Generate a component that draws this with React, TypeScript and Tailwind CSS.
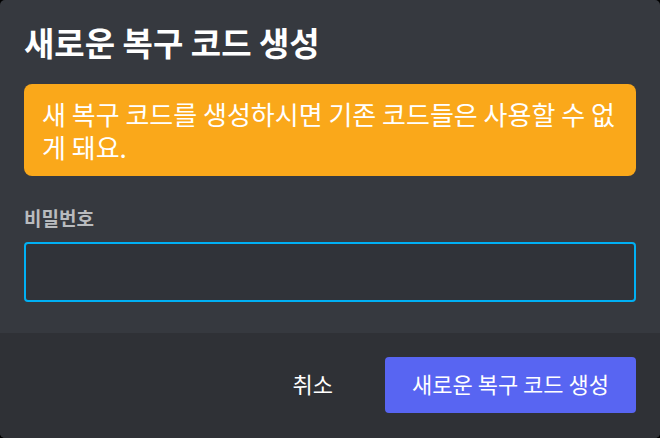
import React from "react";

export default function App() {
  const font = { fontFamily: '"Noto Sans CJK KR", "Noto Sans", sans-serif' };
  return (
    <div className="w-[660px] h-[438px] bg-black" style={font}>
      <div className="w-full h-full rounded-[5px] overflow-hidden flex flex-col bg-[#36393f]">
        <div className="flex flex-col px-6 pt-[24px] pb-[31px]">
          <h1 className="text-[33px] leading-[36px] font-bold text-white">새로운 복구 코드 생성</h1>
          <div className="mt-[24px] rounded-[8px] bg-[#faa81a] pl-[18px] pr-[18px] py-[13px] text-[26px] leading-[33px] text-white">
            새 복구 코드를 생성하시면 기존 코드들은 사용할 수 없게 돼요.
          </div>
          <label className="mt-[30px] text-[19px] leading-[24px] font-bold text-[#b9bbbe]">비밀번호</label>
          <input
            type="password"
            className="mt-[12px] h-[60px] w-full rounded-[4px] border-2 border-[#00b0f4] bg-[#303339] outline-none px-3 text-white"
          />
        </div>
        <div className="flex-1 bg-[#2f3136] flex items-start justify-end px-6 pt-[24px] gap-[28px]">
          <button className="h-[56px] px-6 pb-[3px] text-[22px] text-white">취소</button>
          <button className="h-[56px] w-[251px] rounded-[4px] bg-[#5865f2] pb-[3px] text-[22px] text-white">새로운 복구 코드 생성</button>
        </div>
      </div>
    </div>
  );
}
